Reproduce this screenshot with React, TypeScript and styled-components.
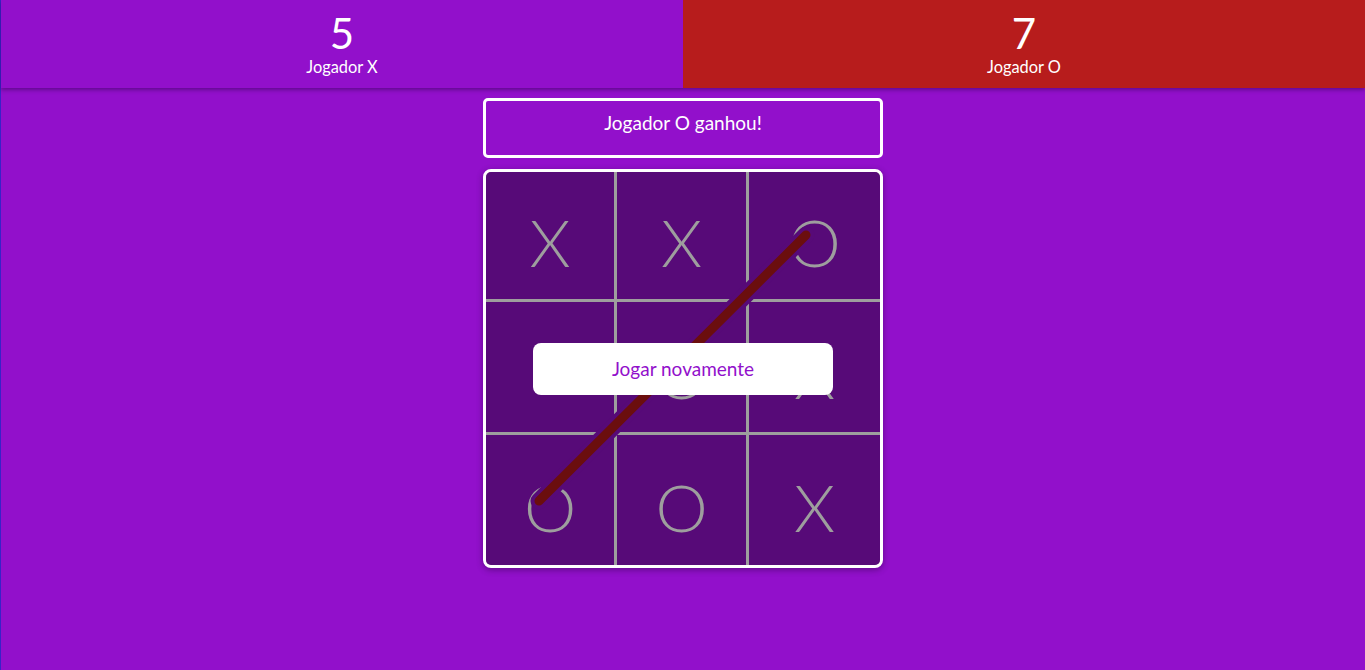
import React from "react";
import styled, { createGlobalStyle } from "styled-components";

const GlobalStyle = createGlobalStyle`
  html, body { margin: 0; padding: 0; }
  body { font-family: Lato, "Noto Sans", sans-serif; background: #9210cb; }
  * { box-sizing: border-box; }
`;

const Page = styled.div`
  min-height: 100vh;
  background: #9210cb;
  border-left: 1px solid #3a22c8;
  font-family: Lato, "Noto Sans", sans-serif;
`;

const Header = styled.header`
  display: grid;
  grid-template-columns: 1fr 1fr;
  height: 88px;
  box-shadow: 0 2px 4px rgba(40, 0, 70, 0.45);
  position: relative;
  z-index: 1;
`;

const ScorePanel = styled.div<{ $bg: string }>`
  background: ${(p) => p.$bg};
  color: #fff;
  display: flex;
  flex-direction: column;
  align-items: center;
  padding-top: 9px;
`;

const ScoreValue = styled.div`
  font-size: 42px;
  line-height: 48px;
`;

const ScoreLabel = styled.div`
  font-size: 16.4px;
  line-height: 20px;
`;

const Main = styled.main`
  display: flex;
  flex-direction: column;
  align-items: center;
  gap: 11px;
  padding-top: 10px;
`;

const Status = styled.div`
  width: 400px;
  height: 60px;
  border: 3px solid #fff;
  border-radius: 5px;
  color: #fff;
  font-size: 19px;
  line-height: 22px;
  text-align: center;
  padding-top: 11px;
`;

const Board = styled.div`
  position: relative;
  width: 400px;
  height: 399px;
  border: 3px solid #fff;
  border-radius: 8px;
  overflow: hidden;
  background: #9e9e9e;
  display: grid;
  grid-template-columns: 128px 129px 131px;
  grid-template-rows: 127px 130px 130px;
  gap: 3px;
  box-shadow: 0 2px 6px rgba(40, 0, 60, 0.45);
`;

const Cell = styled.div`
  background: #570a78;
  color: #9e9e9e;
  display: flex;
  align-items: center;
  justify-content: center;
  font-size: 66px;
  font-weight: 300;
  padding-top: 12px;
`;

const Strike = styled.svg`
  position: absolute;
  inset: 0;
  width: 100%;
  height: 100%;
  pointer-events: none;
`;

const PlayAgain = styled.button`
  position: absolute;
  left: 50%;
  top: 50%;
  transform: translate(-50%, -50%);
  width: 300px;
  height: 52px;
  border: none;
  border-radius: 8px;
  background: #fff;
  color: #9210cb;
  font-family: Lato, "Noto Sans", sans-serif;
  font-size: 19px;
  cursor: pointer;
`;

const cells = ["X", "X", "O", "", "O", "X", "O", "O", "X"];

export default function App() {
  return (
    <Page>
      <GlobalStyle />
      <Header>
        <ScorePanel $bg="#9210cb">
          <ScoreValue>5</ScoreValue>
          <ScoreLabel>Jogador X</ScoreLabel>
        </ScorePanel>
        <ScorePanel $bg="#b71c1c">
          <ScoreValue>7</ScoreValue>
          <ScoreLabel>Jogador O</ScoreLabel>
        </ScorePanel>
      </Header>
      <Main>
        <Status>Jogador O ganhou!</Status>
        <Board>
          {cells.map((c, i) => (
            <Cell key={i}>{c}</Cell>
          ))}
          <Strike viewBox="0 0 394 393">
            <line x1="53" y1="329" x2="320" y2="63" stroke="#570a78" strokeWidth="17" strokeLinecap="round" />
            <line x1="53" y1="329" x2="320" y2="63" stroke="#6b0e0e" strokeWidth="9" strokeLinecap="round" />
          </Strike>
          <PlayAgain>Jogar novamente</PlayAgain>
        </Board>
      </Main>
    </Page>
  );
}
